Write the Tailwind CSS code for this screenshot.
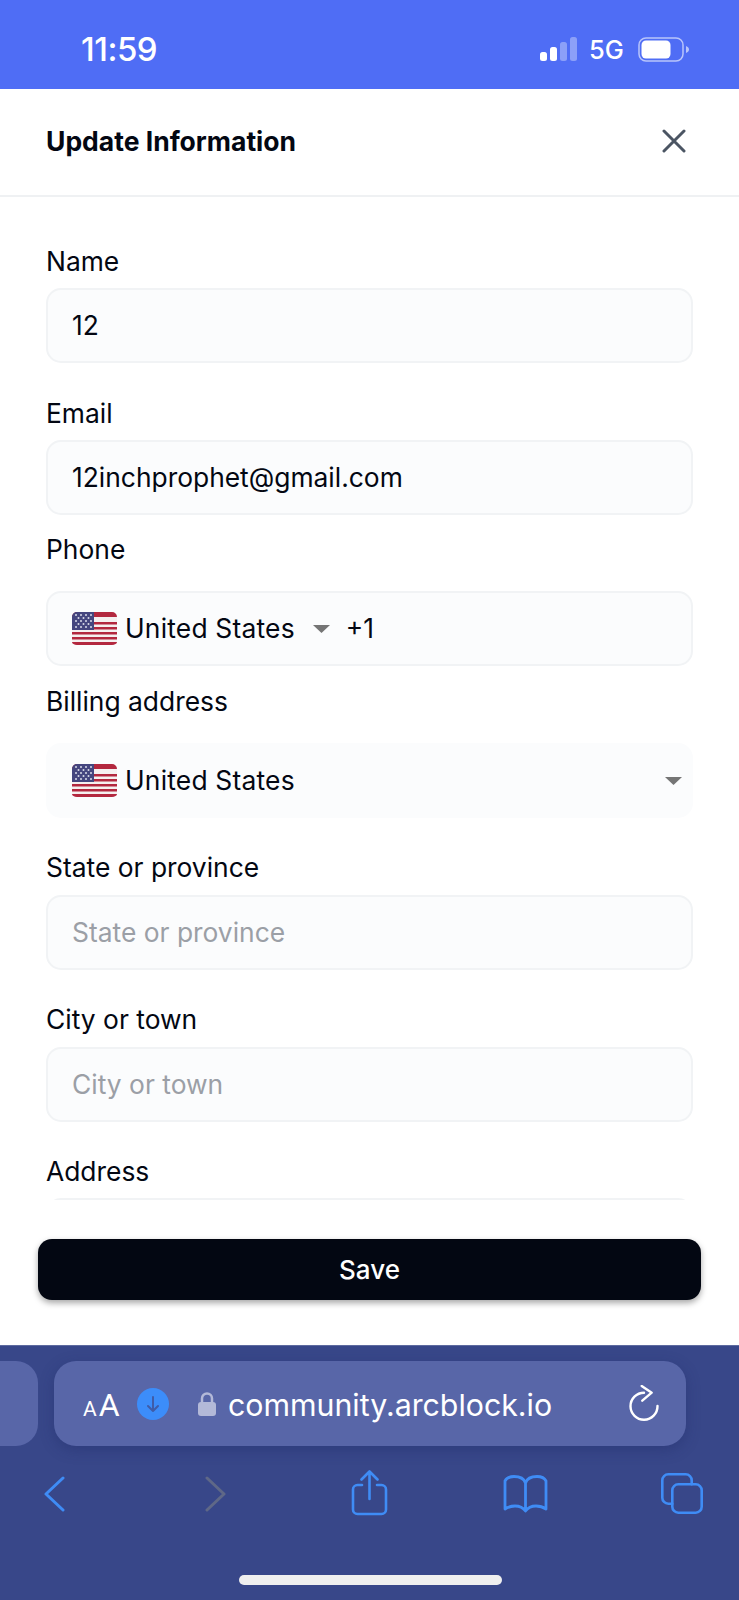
<!DOCTYPE html>
<html>
<head>
<meta charset="utf-8">
<script src="https://cdn.jsdelivr.net/npm/@tailwindcss/browser@4"></script>
</head>
<body class="bg-white">
<div class="w-[739px] h-[1600px] flex flex-col overflow-hidden font-['Inter',sans-serif] text-[#030712]">
  <!-- status bar -->
  <div class="h-[89px] shrink-0 bg-[#4f6df5] flex items-center pl-[81px] pr-[49px] text-white pt-[10px]">
    <span class="font-medium text-[33px] leading-none tracking-[-0.5px]">11:59</span>
    <div class="ml-auto flex items-center">
      <svg width="37" height="25" viewBox="0 0 37 25" class="mr-[12px]">
        <rect x="0" y="15" width="7" height="9" rx="2.5" fill="#fff"/>
        <rect x="10" y="10" width="7" height="14" rx="2.5" fill="#fff"/>
        <rect x="20" y="5" width="7" height="19" rx="2.5" fill="#fff" fill-opacity=".35"/>
        <rect x="30" y="0" width="7" height="24" rx="2.5" fill="#fff" fill-opacity=".35"/>
      </svg>
      <span class="text-[25.500px] font-medium leading-none w-[49px]">5G</span>
      <svg width="52" height="25" viewBox="0 0 52 25">
        <rect x="1" y="1" width="44" height="23" rx="7" fill="none" stroke="#fff" stroke-opacity=".6" stroke-width="1.5"/>
        <rect x="3.5" y="3.5" width="29" height="18" rx="4.5" fill="#fff"/>
        <path d="M48 9c2 .8 3 2 3 3.500s-1 2.700-3 3.500z" fill="#fff" fill-opacity=".6"/>
      </svg>
    </div>
  </div>

  <!-- header -->
  <div class="h-[108px] shrink-0 border-b-2 border-[#eff1f3] flex items-center justify-between pl-[46px] pr-[53px] pb-[2px]">
    <h1 class="text-[26.500px] font-bold leading-none">Update Information</h1>
    <svg width="24" height="24" viewBox="0 0 24 24" fill="none" stroke="#4b5563" stroke-width="3" stroke-linecap="round"><path d="M2 2l20 20M22 2L2 22"/></svg>
  </div>

  <!-- form -->
  <div class="h-[1003px] shrink-0 overflow-hidden px-[46px] pt-[47px] text-[26.400px] leading-[34px]">
    <label class="block mb-[10px]">Name</label>
    <div class="h-[75px] rounded-[15px] bg-[#fbfcfd] border-2 border-[#f1f3f5] flex items-center px-[24px] pb-[2px]">12</div>

    <label class="block mt-[33px] mb-[10px]">Email</label>
    <div class="h-[75px] rounded-[15px] bg-[#fbfcfd] border-2 border-[#f1f3f5] flex items-center px-[24px] pb-[2px]">12inchprophet@gmail.com</div>

    <label class="block mt-[17px] mb-[25px]">Phone</label>
    <div class="h-[75px] rounded-[15px] bg-[#fbfcfd] border-2 border-[#f1f3f5] flex items-center px-[24px]">
      <svg width="45" height="33" viewBox="0 0 45 33" class="mr-[8px] shrink-0">
        <rect width="45" height="33" rx="5" fill="#f5f0f0"/>
        <path d="M5 0h35a5 5 0 0 1 5 5H0a5 5 0 0 1 5-5zM0 10h45v2.500H0zM0 15h45v2.500H0zM0 20h45v2.500H0zM0 25h45v2.500H0zM0 30h45a5 3 0 0 1-5 3H5a5 3 0 0 1-5-3z" fill="#b3283f"/>
        <path d="M5 0h17v18H0V5a5 5 0 0 1 5-5z" fill="#45467f"/>
        <g fill="#d9dbe8"><circle cx="4" cy="3" r="1"/><circle cx="9" cy="3" r="1"/><circle cx="14" cy="3" r="1"/><circle cx="19" cy="3" r="1"/><circle cx="6.500" cy="6" r="1"/><circle cx="11.500" cy="6" r="1"/><circle cx="16.500" cy="6" r="1"/><circle cx="4" cy="9" r="1"/><circle cx="9" cy="9" r="1"/><circle cx="14" cy="9" r="1"/><circle cx="19" cy="9" r="1"/><circle cx="6.500" cy="12" r="1"/><circle cx="11.500" cy="12" r="1"/><circle cx="16.500" cy="12" r="1"/><circle cx="4" cy="15" r="1"/><circle cx="9" cy="15" r="1"/><circle cx="14" cy="15" r="1"/><circle cx="19" cy="15" r="1"/></g>
      </svg>
      <span class="mb-[2px] tracking-[0.2px]">United States</span>
      <svg width="17" height="8" viewBox="0 0 17 8" class="ml-[18px] mr-[16px]"><path d="M0 0h17L8.500 8z" fill="#757575"/></svg>
      <span class="mb-[2px]">+1</span>
    </div>

    <label class="block mt-[18px] mb-[25px]">Billing address</label>
    <div class="h-[75px] rounded-[15px] bg-[#fbfcfd] flex items-center pl-[26px] pr-[11px]">
      <svg width="45" height="33" viewBox="0 0 45 33" class="mr-[8px] shrink-0">
        <rect width="45" height="33" rx="5" fill="#f5f0f0"/>
        <path d="M5 0h35a5 5 0 0 1 5 5H0a5 5 0 0 1 5-5zM0 10h45v2.500H0zM0 15h45v2.500H0zM0 20h45v2.500H0zM0 25h45v2.500H0zM0 30h45a5 3 0 0 1-5 3H5a5 3 0 0 1-5-3z" fill="#b3283f"/>
        <path d="M5 0h17v18H0V5a5 5 0 0 1 5-5z" fill="#45467f"/>
        <g fill="#d9dbe8"><circle cx="4" cy="3" r="1"/><circle cx="9" cy="3" r="1"/><circle cx="14" cy="3" r="1"/><circle cx="19" cy="3" r="1"/><circle cx="6.500" cy="6" r="1"/><circle cx="11.500" cy="6" r="1"/><circle cx="16.500" cy="6" r="1"/><circle cx="4" cy="9" r="1"/><circle cx="9" cy="9" r="1"/><circle cx="14" cy="9" r="1"/><circle cx="19" cy="9" r="1"/><circle cx="6.500" cy="12" r="1"/><circle cx="11.500" cy="12" r="1"/><circle cx="16.500" cy="12" r="1"/><circle cx="4" cy="15" r="1"/><circle cx="9" cy="15" r="1"/><circle cx="14" cy="15" r="1"/><circle cx="19" cy="15" r="1"/></g>
      </svg>
      <span class="mb-[2px] tracking-[0.2px]">United States</span>
      <svg width="17" height="8" viewBox="0 0 17 8" class="ml-auto"><path d="M0 0h17L8.500 8z" fill="#757575"/></svg>
    </div>

    <label class="block mt-[32px] mb-[11px]">State or province</label>
    <div class="h-[75px] rounded-[15px] bg-[#fbfcfd] border-2 border-[#f1f3f5] flex items-center px-[24px] pb-[2px] text-[#9b9fa6]">State or province</div>

    <label class="block mt-[32px] mb-[11px]">City or town</label>
    <div class="h-[75px] rounded-[15px] bg-[#fbfcfd] border-2 border-[#f1f3f5] flex items-center px-[24px] pb-[2px] text-[#9b9fa6]">City or town</div>

    <label class="block mt-[32px] mb-[10px]">Address</label>
    <div class="h-[75px] rounded-[15px] bg-[#fbfcfd] border-2 border-[#f1f3f5]"></div>
  </div>

  <!-- footer -->
  <div class="h-[145px] shrink-0 px-[38px] pt-[39px]">
    <button class="w-full h-[61px] rounded-[14px] bg-[#030712] text-white text-[26px] font-medium shadow-[0_3px_6px_rgba(0,0,0,0.35)]">Save</button>
  </div>

  <!-- safari -->
  <div class="flex-1 bg-[#384789] border-t border-[#5d6a9f] relative flex flex-col">
    <div class="flex pt-[15px] h-[101px] shrink-0">
      <div class="w-[38px] h-[85px] rounded-r-[22px] bg-[#5866a8] shrink-0"></div>
      <div class="ml-[16px] w-[632px] h-[85px] rounded-[22px] bg-[#5866a8] shadow-[0_4px_14px_rgba(30,40,100,0.35)] flex items-center pl-[29px] text-white">
        <span class="w-[36px] flex items-baseline leading-none font-['Roboto',sans-serif] mt-[2px]"><span class="text-[21px] mr-[2px]">A</span><span class="text-[32px]">A</span></span>
        <span class="ml-[18px] w-[32px] h-[32px] rounded-full bg-[#3c8dfa] flex items-center justify-center shrink-0">
          <svg width="12" height="16" viewBox="0 0 12 16" fill="none" stroke="#3f5ca8" stroke-width="2" stroke-linecap="round" stroke-linejoin="round"><path d="M6 1v14M1 10l5 5 5-5"/></svg>
        </span>
        <svg width="18" height="24" viewBox="0 0 18 24" class="ml-[29px] shrink-0"><path d="M4 11V6.500a5 5 0 0 1 10 0V11" fill="none" stroke="#b3b9d8" stroke-width="2.500"/><rect x="0" y="10" width="18" height="14" rx="3" fill="#b3b9d8"/></svg>
        <span class="ml-[12px] mt-[4px] text-[30.300px] leading-none whitespace-nowrap">community.arcblock.io</span>
        <svg width="30" height="36" viewBox="0 0 30 36" fill="none" stroke="#fff" stroke-width="2.400" stroke-linecap="round" stroke-linejoin="round" class="ml-auto mr-[27px] mb-[2px] shrink-0"><path d="M15 7.700A13.500 13.500 0 1 0 28.500 21"/><path d="M12.700 1l10 6.700-9.400 8"/></svg>
      </div>
    </div>
    <div class="relative flex-1">
      <svg width="21" height="36" viewBox="0 0 21 36" fill="none" stroke="#3f8cf5" stroke-width="3" stroke-linecap="round" stroke-linejoin="round" class="absolute left-[44px] top-[29px]"><path d="M19 2L2 18l17 16"/></svg>
      <svg width="21" height="36" viewBox="0 0 21 36" fill="none" stroke="#5f6887" stroke-width="3" stroke-linecap="round" stroke-linejoin="round" class="absolute left-[205px] top-[29px]"><path d="M2 2l17 16L2 34"/></svg>
      <svg width="37" height="46" viewBox="0 0 37 46" fill="none" stroke="#3f8cf5" stroke-width="2.600" stroke-linecap="round" stroke-linejoin="round" class="absolute left-[351px] top-[23px]"><path d="M11 15H6.500a4.500 4.500 0 0 0-4.500 4.500v20a4.500 4.500 0 0 0 4.500 4.500h24a4.500 4.500 0 0 0 4.500-4.500v-20a4.500 4.500 0 0 0-4.500-4.500H26"/><path d="M18.500 29V2M10.500 9.500l8-8 8 8"/></svg>
      <svg width="47" height="38" viewBox="0 0 47 38" fill="none" stroke="#3f8cf5" stroke-width="2.800" stroke-linecap="round" stroke-linejoin="round" class="absolute left-[502px] top-[28px]"><path d="M23.500 8C22 3.500 17 1.500 12 1.500 8 1.500 4.500 3 3 6v28c3-2 6-3 10-3 4.500 0 8 1.500 10.500 5 2.500-3.500 6-5 10.500-5 4 0 7 1 10 3V6c-1.500-3-5-4.500-9-4.500-5 0-10 2-11.500 6.500zM23.500 8v28"/></svg>
      <svg width="44" height="43" viewBox="0 0 44 43" fill="none" stroke="#3f8cf5" stroke-width="2.600" stroke-linecap="round" stroke-linejoin="round" class="absolute left-[660px] top-[25px]"><rect x="12.300" y="12.300" width="29.400" height="28.400" rx="6"/><path d="M12.300 31.700H8.300a6 6 0 0 1-6-6V8.300a6 6 0 0 1 6-6h17.400a6 6 0 0 1 6 6v4"/></svg>
      <div class="absolute left-[239px] top-[128px] w-[263px] h-[10px] rounded-full bg-[#efefef]"></div>
    </div>
  </div>
</div>
</body>
</html>
